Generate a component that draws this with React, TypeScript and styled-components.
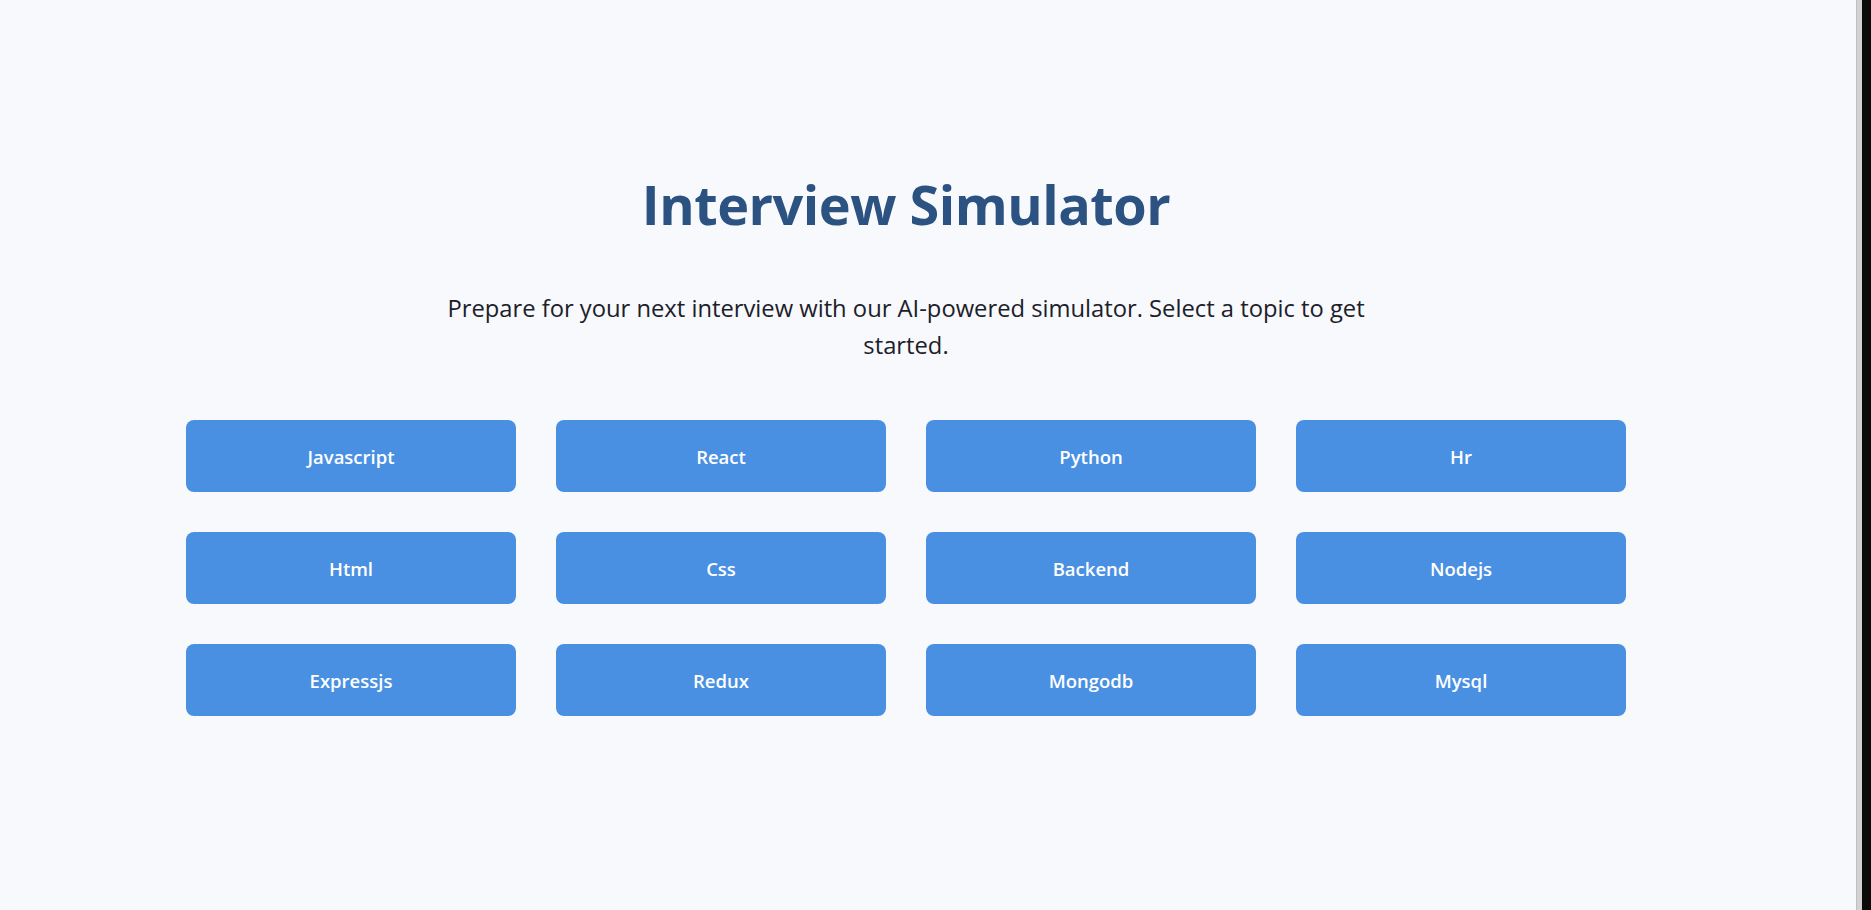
import React from "react";
import styled, { createGlobalStyle } from "styled-components";

const GlobalStyle = createGlobalStyle`
  html, body {
    margin: 0;
    padding: 0;
    height: 100%;
    overflow: hidden;
  }
  body {
    font-family: "Open Sans", "Noto Sans", sans-serif;
    background: #0c0b09;
  }
`;

const Screen = styled.div`
  display: flex;
  width: 100vw;
  height: 100vh;
`;

const Page = styled.main`
  width: 1856px;
  flex: none;
  background: #f7f9fc;
  box-sizing: border-box;
  padding: 0 44px 0 0;
  display: flex;
  flex-direction: column;
  align-items: center;
`;

const WindowEdge = styled.div`
  width: 6px;
  flex: none;
  background: linear-gradient(to right, #b8b8b8, #d6d6d6 30%, #cfcfcf);
`;

const Desktop = styled.div`
  flex: 1;
  background: #0c0b09;
`;

const Title = styled.h1`
  margin: 168px 0 0;
  font-size: 54px;
  line-height: 72px;
  font-weight: 700;
  color: #2c5282;
  letter-spacing: -0.5px;
`;

const Subtitle = styled.p`
  margin: 50px 0 0;
  max-width: 960px;
  font-size: 23.75px;
  line-height: 37px;
  color: #1c2029;
  text-align: center;
`;

const TopicGrid = styled.div`
  margin-top: 56px;
  display: grid;
  grid-template-columns: repeat(4, 330px);
  column-gap: 40px;
  row-gap: 40px;
`;

const TopicButton = styled.button`
  height: 72px;
  border: none;
  border-radius: 8px;
  background: #4a90e2;
  color: #ffffff;
  font-family: "Open Sans", "Noto Sans", sans-serif;
  font-size: 18.5px;
  font-weight: 600;
  cursor: pointer;
  padding: 0;
`;

const topics = [
  "Javascript",
  "React",
  "Python",
  "Hr",
  "Html",
  "Css",
  "Backend",
  "Nodejs",
  "Expressjs",
  "Redux",
  "Mongodb",
  "Mysql",
];

export default function App() {
  return (
    <>
      <GlobalStyle />
      <Screen>
        <Page>
          <Title>Interview Simulator</Title>
          <Subtitle>
            Prepare for your next interview with our AI-powered simulator. Select a topic to get started.
          </Subtitle>
          <TopicGrid>
            {topics.map((t) => (
              <TopicButton key={t}>{t}</TopicButton>
            ))}
          </TopicGrid>
        </Page>
        <WindowEdge />
        <Desktop />
      </Screen>
    </>
  );
}
